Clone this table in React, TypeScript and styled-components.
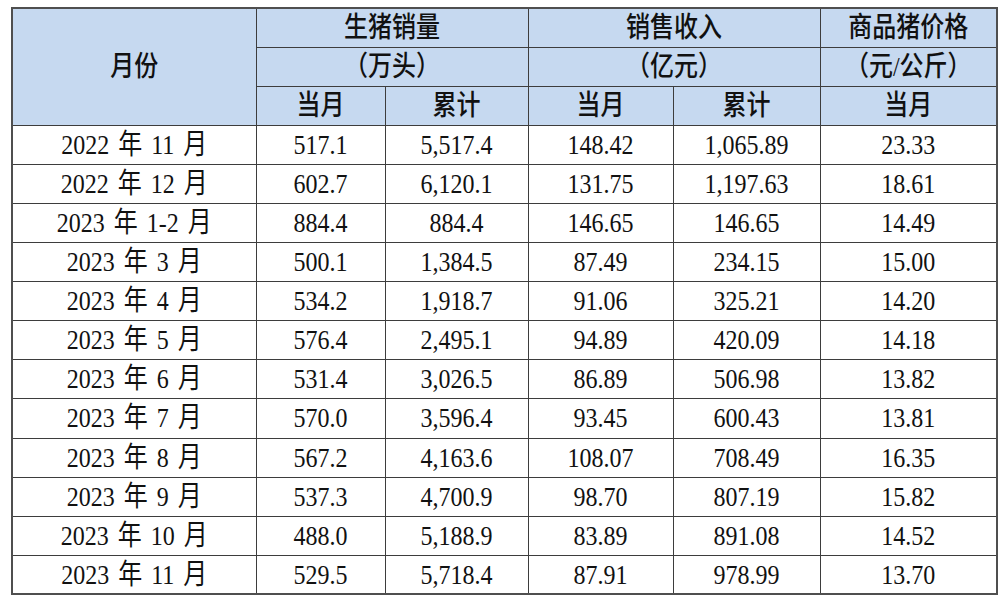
import React from "react";
import styled, { createGlobalStyle } from "styled-components";

const Global = createGlobalStyle`
  html, body { margin: 0; padding: 0; background: #ffffff; }
  body { font-family: "Liberation Serif", "Noto Sans CJK SC", serif; }
`;

const Page = styled.div`
  width: 1000px;
  height: 600px;
  padding: 7px 0 0 11px;
  box-sizing: border-box;
  overflow: hidden;
`;

const Table = styled.table`
  width: 987px;
  table-layout: fixed;
  border-collapse: collapse;
  border: 2px solid #4f4f4f;
  color: #111;
  font-family: "Liberation Serif", "Noto Sans CJK SC", serif;
  font-size: 24px;
`;

const Col = styled.col<{ $w: number }>`
  width: ${(p) => p.$w}px;
`;

const Row = styled.tr`
  height: 39.1px;
`;

const HeadCell = styled.th`
  background: #c6d9f0;
  border: 1px solid #3d3d3d;
  font-weight: 500;
  text-align: center;
  vertical-align: middle;
  padding: 0;
  line-height: 1;
  font-family: "Liberation Serif", "Noto Sans CJK SC", serif;
`;

const Cell = styled.td`
  background: #ffffff;
  border: 1px solid #3d3d3d;
  text-align: center;
  vertical-align: middle;
  padding: 0;
  line-height: 1;
`;

const Text = styled.span`
  display: inline-block;
  transform: scaleY(1.16);
  white-space: pre;
  word-spacing: 3px;
`;

const rows: string[][] = [
  ["2022 年 11 月", "517.1", "5,517.4", "148.42", "1,065.89", "23.33"],
  ["2022 年 12 月", "602.7", "6,120.1", "131.75", "1,197.63", "18.61"],
  ["2023 年 1-2 月", "884.4", "884.4", "146.65", "146.65", "14.49"],
  ["2023 年 3 月", "500.1", "1,384.5", "87.49", "234.15", "15.00"],
  ["2023 年 4 月", "534.2", "1,918.7", "91.06", "325.21", "14.20"],
  ["2023 年 5 月", "576.4", "2,495.1", "94.89", "420.09", "14.18"],
  ["2023 年 6 月", "531.4", "3,026.5", "86.89", "506.98", "13.82"],
  ["2023 年 7 月", "570.0", "3,596.4", "93.45", "600.43", "13.81"],
  ["2023 年 8 月", "567.2", "4,163.6", "108.07", "708.49", "16.35"],
  ["2023 年 9 月", "537.3", "4,700.9", "98.70", "807.19", "15.82"],
  ["2023 年 10 月", "488.0", "5,188.9", "83.89", "891.08", "14.52"],
  ["2023 年 11 月", "529.5", "5,718.4", "87.91", "978.99", "13.70"],
];

export default function App() {
  return (
    <>
      <Global />
      <Page>
        <Table>
          <colgroup>
            <Col $w={244} />
            <Col $w={129} />
            <Col $w={143} />
            <Col $w={145} />
            <Col $w={147} />
            <Col $w={177} />
          </colgroup>
          <thead>
            <Row>
              <HeadCell rowSpan={3}>
                <Text>月份</Text>
              </HeadCell>
              <HeadCell colSpan={2}>
                <Text>生猪销量</Text>
              </HeadCell>
              <HeadCell colSpan={2}>
                <Text>销售收入</Text>
              </HeadCell>
              <HeadCell>
                <Text>商品猪价格</Text>
              </HeadCell>
            </Row>
            <Row>
              <HeadCell colSpan={2}>
                <Text>（万头）</Text>
              </HeadCell>
              <HeadCell colSpan={2}>
                <Text>（亿元）</Text>
              </HeadCell>
              <HeadCell>
                <Text>（元/公斤）</Text>
              </HeadCell>
            </Row>
            <Row>
              <HeadCell>
                <Text>当月</Text>
              </HeadCell>
              <HeadCell>
                <Text>累计</Text>
              </HeadCell>
              <HeadCell>
                <Text>当月</Text>
              </HeadCell>
              <HeadCell>
                <Text>累计</Text>
              </HeadCell>
              <HeadCell>
                <Text>当月</Text>
              </HeadCell>
            </Row>
          </thead>
          <tbody>
            {rows.map((r) => (
              <Row key={r[0]}>
                {r.map((v, i) => (
                  <Cell key={i}>
                    <Text>{v}</Text>
                  </Cell>
                ))}
              </Row>
            ))}
          </tbody>
        </Table>
      </Page>
    </>
  );
}
